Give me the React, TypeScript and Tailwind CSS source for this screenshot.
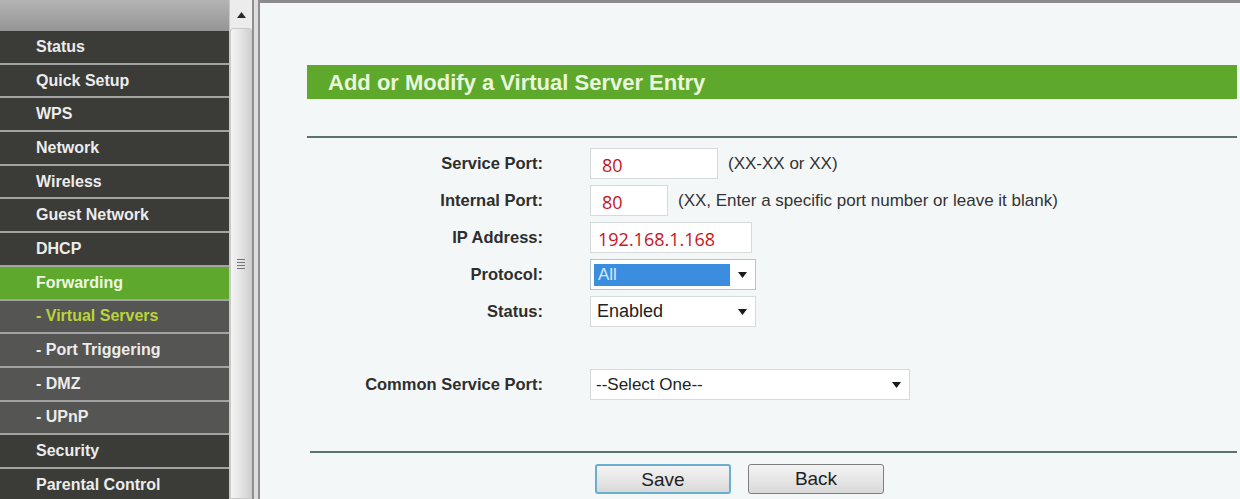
const menu: { label: string; kind: "main" | "sub" | "active" | "current" }[] = [
  { label: "Status", kind: "main" },
  { label: "Quick Setup", kind: "main" },
  { label: "WPS", kind: "main" },
  { label: "Network", kind: "main" },
  { label: "Wireless", kind: "main" },
  { label: "Guest Network", kind: "main" },
  { label: "DHCP", kind: "main" },
  { label: "Forwarding", kind: "active" },
  { label: "- Virtual Servers", kind: "current" },
  { label: "- Port Triggering", kind: "sub" },
  { label: "- DMZ", kind: "sub" },
  { label: "- UPnP", kind: "sub" },
  { label: "Security", kind: "main" },
  { label: "Parental Control", kind: "main" },
];

const rowBg = {
  main: "bg-[#3b3b37] text-[#ececec]",
  sub: "bg-[#555553] text-[#ececec]",
  active: "bg-[#5ea82c] text-[#eef7e2]",
  current: "bg-[#555553] text-[#b9d43a]",
};

function Arrow() {
  return (
    <svg width="9" height="6" viewBox="0 0 9 6" className="shrink-0">
      <path d="M0 0h9L4.5 6z" fill="#1a1a1a" />
    </svg>
  );
}

function Label({ children }: { children: React.ReactNode }) {
  return (
    <div className="w-[236px] shrink-0 text-right text-[16.5px] font-bold text-[#2e2e2e]">{children}</div>
  );
}

function Field({ w, value, pl }: { w: string; value: string; pl: string }) {
  return (
    <div
      className={`${w} ${pl} flex h-[31px] items-center border border-[#d6dada] bg-white pt-[4px] font-['Open_Sans',sans-serif] text-[18px] text-[#c4161c]`}
    >
      {value}
    </div>
  );
}

export default function App() {
  return (
    <div className="flex h-[499px] w-[1240px] overflow-hidden bg-[#f4f7f7] font-['Liberation_Sans',Arial,sans-serif]">
      {/* left menu */}
      <div className="flex w-[229px] shrink-0 flex-col">
        <div className="h-[31px] shrink-0 bg-gradient-to-b from-[#b4b4b4] to-[#959595]" />
        {menu.map((m) => (
          <div
            key={m.label}
            className={`flex h-[33.7px] shrink-0 items-center border-b-2 border-[#a3a3a3] pl-[36px] text-[16px] font-bold ${rowBg[m.kind]}`}
          >
            {m.label}
          </div>
        ))}
      </div>

      {/* scrollbar */}
      <div className="flex w-[23px] shrink-0 flex-col border-l border-[#c9c9c9] bg-[#ececec]">
        <div className="flex h-[28px] items-start justify-center pt-[12px]">
          <svg width="9" height="6" viewBox="0 0 9 6">
            <path d="M4.5 0L9 6H0z" fill="#2a2a2a" />
          </svg>
        </div>
        <div className="flex flex-1 items-center justify-center rounded-t-[3px] border border-[#c8c8c8] bg-gradient-to-r from-[#f4f4f4] via-[#e4e4e4] to-[#cfcfcf]">
          <div className="flex flex-col gap-[2px]">
            <div className="h-px w-[8px] bg-[#777]" />
            <div className="h-px w-[8px] bg-[#777]" />
            <div className="h-px w-[8px] bg-[#777]" />
            <div className="h-px w-[8px] bg-[#777]" />
          </div>
        </div>
      </div>

      {/* frame divider */}
      <div className="w-[8px] shrink-0 border-x-2 border-x-[#8f8f8f] bg-[#dedede]" />

      {/* main */}
      <div className="flex-1 border-t-[3px] border-[#8c8c8c] pl-[47px] pr-[3px]">
        <div className="mt-[62px] flex h-[34px] items-center bg-[#5ea82c] pl-[21px] text-[22px] font-bold text-[#e9f7dc]">
          Add or Modify a Virtual Server Entry
        </div>
        <div className="mt-[37px] h-[2px] bg-[#5b7272]" />

        <div className="mt-[10px] flex flex-col gap-[6px]">
          <div className="flex items-center">
            <Label>Service Port:</Label>
            <div className="ml-[47px] flex items-center gap-[10px]">
              <Field w="w-[128px]" value="80" pl="pl-[11px]" />
              <span className="text-[17px] text-[#333]">(XX-XX or XX)</span>
            </div>
          </div>
          <div className="flex items-center">
            <Label>Internal Port:</Label>
            <div className="ml-[47px] flex items-center gap-[10px]">
              <Field w="w-[78px]" value="80" pl="pl-[11px]" />
              <span className="text-[17px] text-[#333]">(XX, Enter a specific port number or leave it blank)</span>
            </div>
          </div>
          <div className="flex items-center">
            <Label>IP Address:</Label>
            <div className="ml-[47px]">
              <Field w="w-[162px]" value="192.168.1.168" pl="pl-[7px]" />
            </div>
          </div>
          <div className="flex items-center">
            <Label>Protocol:</Label>
            <div className="ml-[47px] flex h-[31px] w-[166px] items-center justify-between border border-[#b9c3c8] bg-white pl-[3px] pr-[8px]">
              <div className="flex h-[22px] w-[136px] items-center bg-[#3b8de0] pl-[4px] text-[17px] text-[#d8e8ff]">All</div>
              <Arrow />
            </div>
          </div>
          <div className="flex items-center">
            <Label>Status:</Label>
            <div className="ml-[47px] flex h-[31px] w-[166px] items-center justify-between border border-[#d6dada] bg-white pl-[6px] pr-[8px] text-[18px] text-[#222]">
              Enabled
              <Arrow />
            </div>
          </div>
        </div>

        <div className="mt-[42px] flex items-center">
          <Label>Common Service Port:</Label>
          <div className="ml-[47px] flex h-[31px] w-[320px] items-center justify-between border border-[#d6dada] bg-white pl-[5px] pr-[8px] text-[17px] text-[#222]">
            --Select One--
            <Arrow />
          </div>
        </div>

        <div className="ml-[3px] mt-[51px] h-[2px] bg-[#5b7272]" />

        <div className="mt-[11px] flex gap-[17px] pl-[288px]">
          <button className="h-[30px] w-[136px] rounded-[3px] border-2 border-[#6aaed0] bg-gradient-to-b from-[#f4f4f4] to-[#d9d9d9] text-[19px] text-[#222]">
            Save
          </button>
          <button className="h-[30px] w-[136px] rounded-[3px] border border-[#7e7e7e] bg-gradient-to-b from-[#f4f4f4] to-[#d9d9d9] text-[19px] text-[#222]">
            Back
          </button>
        </div>
      </div>
    </div>
  );
}
